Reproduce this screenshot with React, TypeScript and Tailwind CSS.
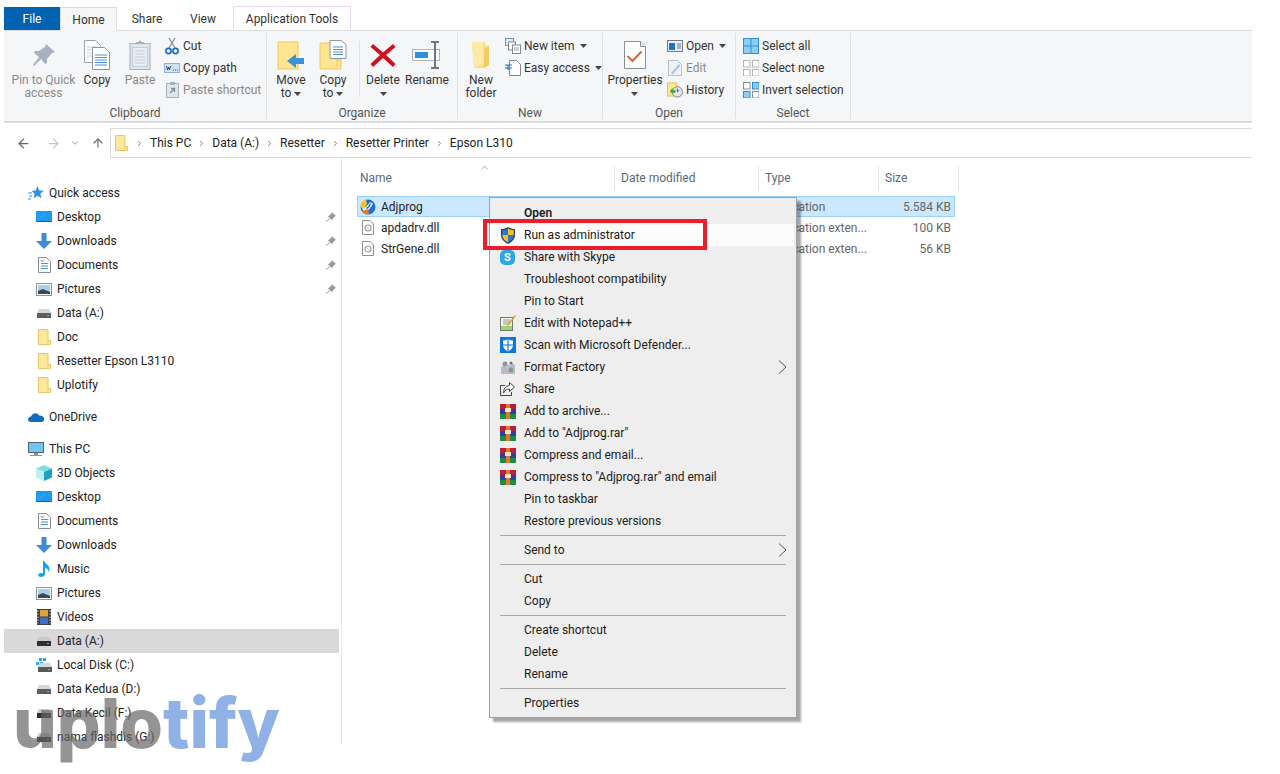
import * as React from 'react';
import { ArrowLeft, ArrowRight, ArrowUp, ChevronDown, ChevronRight, ChevronUp } from 'lucide-react';

const Caret = () => (
  <svg width="7" height="4" viewBox="0 0 7 4" className="inline-block"><path d="M0 0h7L3.5 4z" fill="#444" /></svg>
);

/* ribbon icons */
const PinBig = () => (
  <svg width="24" height="24" viewBox="0 0 24 24">
    <path d="M14 1l9 8-3 1-5 6 0 4-2 1-4-5-7 7-1-1 6-8-5-4 1-2 4 0 6-4z" fill="#a9b1c1" />
  </svg>
);
const CopyBig = () => (
  <svg width="28" height="30" viewBox="0 0 28 30">
    <path d="M1.5.5h11l5 5v17h-16z" fill="#fff" stroke="#9aa3ad" />
    <path d="M4 7h10M4 10h10M4 13h10M4 16h10" stroke="#c5ccd4" />
    <path d="M9.5 7.5h12l5 5v17h-17z" fill="#fff" stroke="#8c96a1" />
    <path d="M12 15h12M12 17.5h12M12 20h12M12 22.5h12M12 25h12" stroke="#4a90d9" strokeWidth="1.2" />
  </svg>
);
const PasteBig = () => (
  <svg width="22" height="30" viewBox="0 0 22 30">
    <rect x="1" y="3.5" width="20" height="26" fill="#dfe5ef" stroke="#a8b0bd" />
    <rect x="3.5" y="7.5" width="15" height="19" fill="#e9edf4" stroke="#c3cad5" />
    <path d="M6 11h10M6 14h10M6 17h10M6 20h10M6 23h10" stroke="#c3cad5" />
    <path d="M7 4h8V2h-2.5L11 0 9.5 2H7z" fill="#a8b0bd" />
  </svg>
);
const ScissorsIcon = () => (
  <svg width="14" height="18" viewBox="0 0 14 18">
    <path d="M4 1l6 10M10 1L4 11" stroke="#8a929c" strokeWidth="1.4" fill="none" />
    <circle cx="3.5" cy="14" r="2.6" fill="none" stroke="#1e6fc4" strokeWidth="1.7" />
    <circle cx="10.5" cy="14" r="2.6" fill="none" stroke="#1e6fc4" strokeWidth="1.7" />
  </svg>
);
const CopyPathIcon = () => (
  <svg width="16" height="10" viewBox="0 0 16 10">
    <rect x=".5" y=".5" width="15" height="9" fill="#cfe4f7" stroke="#8ab6de" />
    <path d="M2.5 3l1 4 1-3 1 3 1-4M9 7h1M11 7h1M13 7h1" stroke="#333" strokeWidth=".9" fill="none" />
  </svg>
);
const PasteShortcutIcon = () => (
  <svg width="13" height="16" viewBox="0 0 13 16">
    <rect x=".5" y="1.5" width="12" height="14" fill="#dfe5ef" stroke="#a8b0bd" />
    <path d="M4 0h5v3H4z" fill="#a8b0bd" />
    <path d="M4 11l4-4M5 6.5h3.5V10" stroke="#7e8896" strokeWidth="1.3" fill="none" />
  </svg>
);
const MoveToIcon = () => (
  <svg width="28" height="30" viewBox="0 0 28 30">
    <path d="M1 2h20v27H1z" fill="#fde68f" stroke="#e9ca62" />
    <path d="M27 18h-8v-4l-9 7 9 7v-4h8z" fill="#3d93d9" />
  </svg>
);
const CopyToIcon = () => (
  <svg width="28" height="30" viewBox="0 0 28 30">
    <path d="M1 3h21v26H1z" fill="#fde68f" stroke="#e9ca62" />
    <path d="M18 27v-7h4" fill="none" stroke="#e9ca62" />
    <path d="M11 .5h11l5 4v14H11z" fill="#fff" stroke="#8c96a1" />
    <path d="M14 7h10M14 9.5h10M14 12h10M14 14.5h10" stroke="#4a90d9" />
  </svg>
);
const DeleteIcon = () => (
  <svg width="26" height="26" viewBox="0 0 26 26">
    <path d="M3 2l10 8.5L23 2l2.5 3L16 13l9.5 9-2.5 3L13 16 3 25l-2.5-3L10 13 .5 5z" fill="#d20f1f" />
  </svg>
);
const RenameIcon = () => (
  <svg width="30" height="28" viewBox="0 0 30 28">
    <rect x=".5" y="8.5" width="27" height="11" fill="#fff" stroke="#aab3bd" />
    <rect x="3" y="11" width="13" height="6" fill="#2e8fdc" />
    <path d="M19 1h8M19 27h8M23 1v26" stroke="#6d7681" strokeWidth="2" />
  </svg>
);
const NewFolderBig = () => (
  <svg width="20" height="28" viewBox="0 0 20 28">
    <path d="M1 1h13v3l4 1v19l-5 3H3z" fill="#fcdd83" />
    <path d="M1 1h11l1 21-10 5z" fill="#fdeaa6" />
    <path d="M13 8l5-3v19l-5 3z" fill="#f4cb62" />
  </svg>
);
const NewItemIcon = () => (
  <svg width="16" height="16" viewBox="0 0 16 16">
    <rect x=".5" y=".5" width="8" height="7" fill="#dcebf8" stroke="#7792ad" />
    <rect x="3.5" y="4" width="7" height="8" fill="#fff" stroke="#7e8893" />
    <rect x="7.5" y="7" width="8" height="8.5" fill="#fff" stroke="#7e8893" />
    <path d="M9 10h5M9 12h5" stroke="#9aa3ad" />
  </svg>
);
const EasyAccessIcon = () => (
  <svg width="16" height="16" viewBox="0 0 16 16">
    <path d="M4.5.5h7l4 4v11h-11z" fill="#fff" stroke="#7e8893" />
    <path d="M0 5h7M0 8h7M3 5v5" stroke="#2272b9" strokeWidth="1.1" fill="none" />
  </svg>
);
const PropertiesBig = () => (
  <svg width="22" height="28" viewBox="0 0 22 28">
    <path d="M.5.5h16l5 5v22H.5z" fill="#fff" stroke="#8a8f96" />
    <path d="M16.5.5v5h5" fill="#eee" stroke="#8a8f96" />
    <path d="M3.5 15l5 5 9-9.5" fill="none" stroke="#da6a2c" strokeWidth="2" />
  </svg>
);
const OpenIcon = () => (
  <svg width="16" height="12" viewBox="0 0 16 12">
    <rect x=".5" y=".5" width="15" height="11" fill="#e8eef5" stroke="#6f7b87" />
    <rect x="2" y="3" width="6" height="7" fill="#1e74c9" />
    <path d="M10 4h4M10 6h4M10 8h4" stroke="#6f7b87" />
  </svg>
);
const EditIcon = () => (
  <svg width="14" height="16" viewBox="0 0 14 16">
    <path d="M.5.5h9l4 4v11H.5z" fill="#eef1f6" stroke="#b9c0cb" />
    <path d="M3 13l8-9 1.5 1.5-8 9z" fill="#a9c4e6" />
  </svg>
);
const HistoryIcon = () => (
  <svg width="17" height="16" viewBox="0 0 17 16">
    <rect x=".5" y=".5" width="10" height="14" fill="#fde68f" stroke="#e3c35a" />
    <circle cx="11" cy="10" r="5.5" fill="#e3e6ea" stroke="#7a828c" />
    <path d="M11 6.5V10l2-2" stroke="#555" fill="none" />
    <path d="M3 9l3-3v2h3v3H6v1.5z" fill="#46a53c" />
  </svg>
);
const Grid4: React.FC<{ cells: boolean[]; stroke: string }> = ({ cells, stroke }) => (
  <svg width="16" height="16" viewBox="0 0 16 16">
    {[[0, 0], [9, 0], [0, 9], [9, 9]].map(([x, y], i) => (
      <rect key={i} x={x + 0.5} y={y + 0.5} width="6.5" height="6.5" fill={cells[i] ? '#8fcdf7' : '#fff'} stroke={cells[i] ? '#2d8fdc' : stroke} />
    ))}
  </svg>
);
const SelectAllIcon = () => (
  <svg width="16" height="16" viewBox="0 0 16 16">
    <rect x=".5" y=".5" width="15" height="15" fill="#8fcdf7" stroke="#2d8fdc" />
    <path d="M8 0v16M0 8h16" stroke="#2d8fdc" />
  </svg>
);

/* nav pane icons */
const Star = () => (
  <svg width="16" height="16" viewBox="0 0 16 16">
    <path d="M9.5 1l1.700 4.400 4.600.3-3.500 3 1.200 4.600-4-2.500-4 2.500 1.200-4.600-3-2.700 4-.4z" fill="#2f8fe0" />
    <path d="M0 8h4M1 11h3M0 14h3" stroke="#2f8fe0" />
  </svg>
);
const DesktopIcon = () => (
  <svg width="16" height="14" viewBox="0 0 16 14">
    <rect width="16" height="11" y="1" fill="#1e9af0" />
    <path d="M1 11L8 5" stroke="#49b2f5" />
    <path d="M0 11.5h16" stroke="#1a5f94" />
  </svg>
);
const DownloadsIcon = () => (
  <svg width="16" height="16" viewBox="0 0 16 16">
    <path d="M5.5 0h5v8H16l-8 8-8-8h5.5z" fill="#3a8bdc" />
  </svg>
);
const DocumentsIcon = () => (
  <svg width="13" height="16" viewBox="0 0 13 16">
    <path d="M.5.5h8l4 4v11H.5z" fill="#fff" stroke="#8b8f95" />
    <path d="M3 4h3M3 6.5h7M3 9h7M3 11.5h7" stroke="#3d94d9" />
  </svg>
);
const PicturesIcon = () => (
  <svg width="16" height="13" viewBox="0 0 16 13">
    <rect x=".5" y=".5" width="15" height="12" fill="#fff" stroke="#8f9498" />
    <rect x="2" y="2" width="12" height="9" fill="#a9cdea" />
    <path d="M2 8l5-2 7 3v2H2z" fill="#3a4a58" />
  </svg>
);
const DriveIcon: React.FC<{ dark?: boolean }> = ({ dark }) => (
  <svg width="14" height="9" viewBox="0 0 14 9">
    <path d="M2 0h10l2 4H0z" fill={dark ? '#c9c9c9' : '#d5d8da'} />
    <rect y="4" width="14" height="5" fill={dark ? '#2e2e2e' : '#5a5e60'} />
    <rect x="10" y="6" width="2" height="1" fill="#55d14a" />
  </svg>
);
const LocalDiskIcon = () => (
  <svg width="16" height="14" viewBox="0 0 16 14">
    <path d="M3 0h3v3H3zM7 0h3v3H7zM0 4h3v3H0zM4 4h3v3H4z" fill="#2aa5e8" />
    <path d="M4 5h10l2 4H2z" fill="#d5d8da" />
    <rect x="2" y="9" width="14" height="5" fill="#55595c" />
    <rect x="12" y="11" width="2" height="1" fill="#55d14a" />
  </svg>
);
const FolderSmall = () => (
  <svg width="13" height="16" viewBox="0 0 13 16">
    <path d="M.5.5H10v11h2.500v4H.5z" fill="#ffe89c" stroke="#e6c767" />
    <path d="M10 11.5v4" stroke="#e6c767" />
  </svg>
);
const OneDriveIcon = () => (
  <svg width="16" height="10" viewBox="0 0 16 10">
    <path d="M3 10C-1 10-1 5 3 4.5 4.5.5 9.5 0 11 3.5c3-.5 6 2 5 4.5-.5 1.5-1.5 2-3 2z" fill="#0f6cc0" />
  </svg>
);
const ThisPcIcon = () => (
  <svg width="16" height="15" viewBox="0 0 16 15">
    <rect x=".5" y=".5" width="15" height="10" fill="#6fc6f2" stroke="#566772" />
    <path d="M6 11h4v2H6z" fill="#8d9599" />
    <path d="M2 13.5h12" stroke="#8d9599" />
  </svg>
);
const CubeIcon = () => (
  <svg width="16" height="16" viewBox="0 0 16 16">
    <path d="M8 0l8 3.5L8 7 0 3.5z" fill="#7fdce2" />
    <path d="M0 3.5L8 7v9l-8-3.5z" fill="#bdeef0" />
    <path d="M16 3.5L8 7v9l8-3.5z" fill="#1e9fc4" />
  </svg>
);
const MusicIcon = () => (
  <svg width="12" height="16" viewBox="0 0 12 16">
    <path d="M5 0h1.500c.5 3 5 4 5 8 0 1-.5 2-1 3 0-2-1.500-4-3.500-4.500V13c0 2-2 3-4 3-4 0-3.500-4 0-4 .7 0 1.500.2 2 .5z" fill="#18a0ea" />
  </svg>
);
const VideosIcon = () => (
  <svg width="14" height="16" viewBox="0 0 14 16">
    <rect width="14" height="16" fill="#3b3f44" />
    <rect x="3" y="1" width="8" height="6.5" fill="#d8a93a" />
    <rect x="3" y="8.5" width="8" height="6.5" fill="#3f6fc7" />
    <path d="M1 1.5v13M13 1.5v13" stroke="#d8d8d8" strokeDasharray="1.5 1.5" />
  </svg>
);
const PinSmall = () => (
  <svg width="10" height="10" viewBox="0 0 10 10">
    <path d="M6 0l4 4-1.200.4L6.500 7l-.3 1.500L1.700 4 3 3.700 5.600 1.200zM3 6.200l.8.800L.5 10 0 9.500z" fill="#9a9a9a" />
  </svg>
);

/* file icons */
const AdjprogIcon = () => (
  <svg width="16" height="16" viewBox="0 0 16 16">
    <circle cx="8" cy="8" r="7.5" fill="#1f6fd0" />
    <path d="M2 9c3 0 5.500-2.500 8-6l3 1.500c-2 4-5 8-9 9z" fill="#dff0ff" />
    <path d="M.5 8c0-3 2-6.500 5.500-7.500L7 5 3 10z" fill="#f6c51f" />
    <path d="M2 12l6-2 1 4.500-3.500 1z" fill="#f07a1a" />
    <path d="M6 9c2-1 3-3 4-5l1 1c-1 2-2 4-4 5z" fill="#1f6fd0" />
  </svg>
);
const DllIcon = () => (
  <svg width="12" height="15" viewBox="0 0 12 15">
    <path d="M.5.5H8L11.500 4v10.500H.5z" fill="#fff" stroke="#8f8f8f" />
    <circle cx="6" cy="8" r="3" fill="none" stroke="#9d9d9d" strokeWidth="1.2" />
    <path d="M4 6l4 4" stroke="#c4c4c4" />
  </svg>
);

/* context menu icons */
const ShieldIcon = () => (
  <svg width="16" height="17" viewBox="0 0 16 17">
    <path d="M8 0c2 1.500 4.500 2 7 2v6c0 4-3 7-7 9-4-2-7-5-7-9V2c2.500 0 5-.5 7-2z" fill="#2a3f66" />
    <path d="M8 1.500V8h5.800V3.200C12 3 9.500 2.500 8 1.500zM8 8v7.500C5.200 14 2.700 12 2.200 8z" fill="#f5bf26" />
    <path d="M8 1.500V8H2.200V3.200C4 3 6.500 2.500 8 1.500zM8 8v7.500c2.800-1.500 5.300-3.500 5.800-7.500z" fill="#2f77c9" />
  </svg>
);
const SkypeIcon = () => (
  <div className="w-[15px] h-[15px] rounded-[5px] bg-[#2ba6e8] flex items-center justify-center text-white text-[11px] font-bold leading-none">S</div>
);
const NotepadIcon = () => (
  <svg width="16" height="16" viewBox="0 0 16 16">
    <rect x=".5" y="2.5" width="12" height="13" fill="#f6f6e2" stroke="#777" />
    <path d="M1 11h11v4H1z" fill="#9ed36a" />
    <path d="M3 5h7M3 7h7M3 9h5" stroke="#999" />
    <path d="M15 0l1 1-7 9-2 1 .5-2z" fill="#d2a32e" />
  </svg>
);
const DefenderIcon = () => (
  <svg width="16" height="16" viewBox="0 0 16 16">
    <rect width="16" height="16" fill="#0a78d7" />
    <path d="M8 2c1.500 1 3.500 1.500 5 1.500V8c0 3-2 5-5 6.500C5 13 3 11 3 8V3.500C4.500 3.500 6.500 3 8 2z" fill="#fff" />
    <path d="M8 2v12.500M3 8h10" stroke="#0a78d7" strokeWidth="1.2" />
  </svg>
);
const FormatFactoryIcon = () => (
  <svg width="16" height="16" viewBox="0 0 16 16">
    <path d="M1 15V8l4-2 1 2 3-3 1 2 2-3 3 2v9z" fill="#b9bec4" />
    <circle cx="5" cy="5" r="2.5" fill="#8e949b" />
    <circle cx="11" cy="11" r="2.5" fill="#8e949b" />
    <circle cx="11" cy="4" r="1.5" fill="#6a7077" />
  </svg>
);
const ShareIcon = () => (
  <svg width="15" height="14" viewBox="0 0 15 14">
    <path d="M5 3.500H.5v10h11V10" fill="none" stroke="#444" />
    <path d="M9.500.5l5 4.500-5 4.500V7C7 7 5 8 3.500 11c0-4 2-7 6-7.500z" fill="#fff" stroke="#444" />
  </svg>
);
const WinrarIcon = () => (
  <svg width="16" height="15" viewBox="0 0 16 15">
    <rect width="16" height="5" fill="#b5203e" />
    <rect y="5" width="16" height="5" fill="#2f3f9e" />
    <rect y="10" width="16" height="5" fill="#1e8a44" />
    <rect x="6" width="4" height="15" fill="#e8772a" />
    <rect x="5" y="4" width="6" height="4" fill="#f3e6c5" />
  </svg>
);
const MenuArrow = () => (
  <svg width="9" height="14" viewBox="0 0 9 14" className="ml-auto mr-[7px]"><path d="M1 .5L8 7l-7 6.500" fill="none" stroke="#555" /></svg>
);

const LargeBtn: React.FC<{ w: string; icon: React.ReactNode; lines: string[]; off?: boolean; caret?: boolean }> = ({ w, icon, lines, off, caret }) => (
  <div className={`${w} flex flex-col items-center ${off ? 'text-[#8a8a8a]' : 'text-[#333]'}`}>
    <div className="h-[39px] mt-[2px] flex items-center justify-center">{icon}</div>
    <div className="leading-[13px] text-center whitespace-nowrap">
      {lines.map((l, i) => (
        <div key={i} className="flex items-center justify-center gap-[3px] h-[13px]">
          {l}
          {caret && i === lines.length - 1 && lines.length > 1 && <Caret />}
        </div>
      ))}
      {caret && lines.length === 1 && <div className="h-[13px] flex items-center justify-center"><Caret /></div>}
    </div>
  </div>
);

const SmallBtn: React.FC<{ icon: React.ReactNode; label: string; off?: boolean; caret?: boolean }> = ({ icon, label, off, caret }) => (
  <div className={`h-[22px] flex items-center gap-[3px] whitespace-nowrap ${off ? 'text-[#8a8a8a]' : 'text-[#333]'}`}>
    <div className="w-4 flex justify-center">{icon}</div>
    <span>{label}</span>
    {caret && <span className="ml-[2px] flex"><Caret /></span>}
  </div>
);

const Group: React.FC<{ w: string; pad?: string; label: string; children: React.ReactNode }> = ({ w, pad, label, children }) => (
  <div className={`${w} shrink-0 border-r border-[#dfe1e3] my-[2px] flex flex-col`}>
    <div className={`h-[73px] shrink-0 flex ${pad ?? ''}`}>{children}</div>
    <div className="h-[13px] leading-[14px] shrink-0 text-center text-[#555]">{label}</div>
  </div>
);

const Ribbon = () => (
  <div className="h-[92px] ml-[4px] w-[1248px] bg-[#f5f6f7] border-b-2 border-[#dadbdc] flex text-[12px]">
    <Group w="w-[263px]" pad="pl-[8px]" label="Clipboard">
      <LargeBtn w="w-[63px]" icon={<PinBig />} lines={['Pin to Quick', 'access']} off />
      <LargeBtn w="w-[44px]" icon={<CopyBig />} lines={['Copy']} />
      <LargeBtn w="w-[42px]" icon={<PasteBig />} lines={['Paste']} off />
      <div className="ml-[3px] pt-[2px]">
        <SmallBtn icon={<ScissorsIcon />} label="Cut" />
        <SmallBtn icon={<CopyPathIcon />} label="Copy path" />
        <SmallBtn icon={<PasteShortcutIcon />} label="Paste shortcut" off />
      </div>
    </Group>
    <Group w="w-[191px]" pad="pl-[3px]" label="Organize">
      <LargeBtn w="w-[42px]" icon={<MoveToIcon />} lines={['Move', 'to']} caret />
      <LargeBtn w="w-[42px]" icon={<CopyToIcon />} lines={['Copy', 'to']} caret />
      <div className="ml-[5px] mt-[8px] w-px h-[56px] bg-[#dfe1e3]" />
      <LargeBtn w="w-[46px]" icon={<DeleteIcon />} lines={['Delete']} caret />
      <LargeBtn w="w-[42px]" icon={<RenameIcon />} lines={['Rename']} />
    </Group>
    <Group w="w-[145px]" pad="pl-[4px]" label="New">
      <LargeBtn w="w-[40px]" icon={<NewFolderBig />} lines={['New', 'folder']} />
      <div className="ml-[5px] pt-[2px]">
        <SmallBtn icon={<NewItemIcon />} label="New item" caret />
        <SmallBtn icon={<EasyAccessIcon />} label="Easy access" caret />
      </div>
    </Group>
    <Group w="w-[133px]" label="Open">
      <LargeBtn w="w-[64px]" icon={<PropertiesBig />} lines={['Properties']} caret />
      <div className="pt-[2px]">
        <SmallBtn icon={<OpenIcon />} label="Open" caret />
        <SmallBtn icon={<EditIcon />} label="Edit" off />
        <SmallBtn icon={<HistoryIcon />} label="History" />
      </div>
    </Group>
    <Group w="w-[115px]" pad="pl-[7px]" label="Select">
      <div className="pt-[2px]">
        <SmallBtn icon={<SelectAllIcon />} label="Select all" />
        <SmallBtn icon={<Grid4 cells={[false, false, false, false]} stroke="#b5b5b5" />} label="Select none" />
        <SmallBtn icon={<Grid4 cells={[false, true, true, false]} stroke="#8a8f96" />} label="Invert selection" />
      </div>
    </Group>
  </div>
);

const Tabs = () => (
  <div className="h-[31px] ml-[4px] w-[1248px] border-b border-[#dadbdc] flex items-end text-[12px] text-[#333]">
    <div className="w-[56px] h-[23px] bg-[#0063b1] text-white flex items-center justify-center">File</div>
    <div className="w-[57px] h-[24px] -mb-px bg-[#f5f6f7] border border-b-0 border-[#dadbdc] flex items-center justify-center">Home</div>
    <div className="w-[60px] h-[23px] flex items-center justify-center">Share</div>
    <div className="w-[52px] h-[23px] flex items-center justify-center">View</div>
    <div className="ml-[4px] w-[118px] h-[24px] border border-b-0 border-[#e6d5ec] flex items-center justify-center">Application Tools</div>
  </div>
);

const crumbs = ['This PC', 'Data (A:)', 'Resetter', 'Resetter Printer', 'Epson L310'];

const AddressBar = () => (
  <div className="mt-[5px] h-[30px] flex text-[12px]">
    <div className="w-[110px] shrink-0 pl-[16px] flex items-center text-[#666]">
      <ArrowLeft size={15} strokeWidth={2} />
      <ArrowRight size={15} strokeWidth={2} className="ml-[15px] text-[#c6c6c6]" />
      <ChevronDown size={10} strokeWidth={2} className="ml-[9px] text-[#888]" />
      <ArrowUp size={14} strokeWidth={2} className="ml-[11px]" />
    </div>
    <div className="w-[1142px] border-y border-l border-[#dcdcdc] flex items-center pl-[4px] text-[#222]">
      <FolderSmall />
      <div className="ml-[4px] flex items-center">
        {crumbs.map((c) => (
          <React.Fragment key={c}>
            <ChevronRight size={9} strokeWidth={2.5} className="text-[#777] mx-[3px]" />
            <span className="ml-[3px] mr-[3px]">{c}</span>
          </React.Fragment>
        ))}
      </div>
    </div>
  </div>
);

const NavRow: React.FC<{ icon: React.ReactNode; label: string; pin?: boolean; top?: boolean; on?: boolean; gap?: boolean }> = ({ icon, label, pin, top, on, gap }) => (
  <div className={`h-[24px] flex items-center ${on ? 'bg-[#d9d9d9]' : ''} ${gap ? 'mt-[8px]' : ''} ${top ? 'pl-[24px]' : 'pl-[32px]'}`}>
    <div className="w-[16px] flex justify-center shrink-0">{icon}</div>
    <span className="ml-[5px] text-[#222] whitespace-nowrap">{label}</span>
    {pin && <span className="ml-auto mr-[3px] flex"><PinSmall /></span>}
  </div>
);

const Sidebar = () => (
  <div className="ml-[4px] w-[338px] shrink-0 border-r border-[#e6e6e6] pr-[2px] pt-[23px] h-[587px] text-[12px] box-border">
    <NavRow top icon={<Star />} label="Quick access" />
    <NavRow icon={<DesktopIcon />} label="Desktop" pin />
    <NavRow icon={<DownloadsIcon />} label="Downloads" pin />
    <NavRow icon={<DocumentsIcon />} label="Documents" pin />
    <NavRow icon={<PicturesIcon />} label="Pictures" pin />
    <NavRow icon={<DriveIcon />} label="Data (A:)" />
    <NavRow icon={<FolderSmall />} label="Doc" />
    <NavRow icon={<FolderSmall />} label="Resetter Epson L3110" />
    <NavRow icon={<FolderSmall />} label="Uplotify" />
    <NavRow gap top icon={<OneDriveIcon />} label="OneDrive" />
    <NavRow gap top icon={<ThisPcIcon />} label="This PC" />
    <NavRow icon={<CubeIcon />} label="3D Objects" />
    <NavRow icon={<DesktopIcon />} label="Desktop" />
    <NavRow icon={<DocumentsIcon />} label="Documents" />
    <NavRow icon={<DownloadsIcon />} label="Downloads" />
    <NavRow icon={<MusicIcon />} label="Music" />
    <NavRow icon={<PicturesIcon />} label="Pictures" />
    <NavRow icon={<VideosIcon />} label="Videos" />
    <NavRow on icon={<DriveIcon dark />} label="Data (A:)" />
    <NavRow icon={<LocalDiskIcon />} label="Local Disk (C:)" />
    <NavRow icon={<DriveIcon />} label="Data Kedua (D:)" />
    <NavRow icon={<DriveIcon dark />} label="Data Kecil (F:)" />
    <NavRow icon={<DriveIcon dark />} label="nama flashdis (G:)" />
  </div>
);

const FileRow: React.FC<{ icon: React.ReactNode; name: string; type: string; size: string; on?: boolean }> = ({ icon, name, type, size, on }) => (
  <div className={`h-[21px] w-[598px] flex items-center border ${on ? 'bg-[#cce8ff] border-[#99d1ff]' : 'border-transparent'}`}>
    <div className="w-[16px] ml-[2px] flex justify-center shrink-0">{icon}</div>
    <span className="ml-[5px] w-[233px] text-[#222]">{name}</span>
    <span className="ml-[151px] w-[116px] text-[#666] whitespace-nowrap">{type}</span>
    <span className="w-[70px] text-right text-[#666]">{size}</span>
  </div>
);

const FileList = () => (
  <div className="ml-[15px] pt-[8px] text-[12px]">
    <div className="relative h-[24px] flex text-[#5a6a7a]">
      <ChevronUp size={11} strokeWidth={1.5} className="absolute left-[122px] -top-[4px] text-[#777]" />
      <div className="w-[258px] pl-[3px] flex items-center border-r border-[#e5e5e5]">Name</div>
      <div className="w-[144px] pl-[6px] flex items-center border-r border-[#e5e5e5]">Date modified</div>
      <div className="w-[120px] pl-[6px] flex items-center border-r border-[#e5e5e5]">Type</div>
      <div className="w-[80px] pl-[6px] flex items-center border-r border-[#e5e5e5]">Size</div>
    </div>
    <div className="mt-[6px]">
      <FileRow on icon={<AdjprogIcon />} name="Adjprog" type="Application" size="5.584 KB" />
      <FileRow icon={<DllIcon />} name="apdadrv.dll" type="Application exten..." size="100 KB" />
      <FileRow icon={<DllIcon />} name="StrGene.dll" type="Application exten..." size="56 KB" />
    </div>
  </div>
);

const MenuItem: React.FC<{ icon?: React.ReactNode; label: string; bold?: boolean; on?: boolean; arrow?: boolean }> = ({ icon, label, bold, on, arrow }) => (
  <div className={`h-[22px] flex items-center pl-[9px] ${on ? 'bg-[#fbfbfb]' : ''}`}>
    <div className="w-[17px] flex justify-center shrink-0">{icon}</div>
    <span className={`ml-[8px] whitespace-nowrap text-[#1c1c1c] ${bold ? 'font-semibold' : ''}`}>{label}</span>
    {arrow && <MenuArrow />}
  </div>
);
const MenuSep = () => <div className="h-px bg-[#a9a9a9] ml-[10px] mr-[8px] my-[3px]" />;

const ContextMenu = () => (
  <div className="absolute left-[489px] top-[197px] w-[308px] h-[521px] bg-[#eeeeee] border border-[#a0a0a0] shadow-[4px_4px_2px_rgba(0,0,0,0.35)] pt-[4px] pr-[2px] text-[12px]">
    <MenuItem bold label="Open" />
    <MenuItem on icon={<ShieldIcon />} label="Run as administrator" />
    <MenuItem icon={<SkypeIcon />} label="Share with Skype" />
    <MenuItem label="Troubleshoot compatibility" />
    <MenuItem label="Pin to Start" />
    <MenuItem icon={<NotepadIcon />} label="Edit with Notepad++" />
    <MenuItem icon={<DefenderIcon />} label="Scan with Microsoft Defender..." />
    <MenuItem icon={<FormatFactoryIcon />} label="Format Factory" arrow />
    <MenuItem icon={<ShareIcon />} label="Share" />
    <MenuItem icon={<WinrarIcon />} label="Add to archive..." />
    <MenuItem icon={<WinrarIcon />} label='Add to "Adjprog.rar"' />
    <MenuItem icon={<WinrarIcon />} label="Compress and email..." />
    <MenuItem icon={<WinrarIcon />} label='Compress to "Adjprog.rar" and email' />
    <MenuItem label="Pin to taskbar" />
    <MenuItem label="Restore previous versions" />
    <MenuSep />
    <MenuItem label="Send to" arrow />
    <MenuSep />
    <MenuItem label="Cut" />
    <MenuItem label="Copy" />
    <MenuSep />
    <MenuItem label="Create shortcut" />
    <MenuItem label="Delete" />
    <MenuItem label="Rename" />
    <MenuSep />
    <MenuItem label="Properties" />
    <div className="absolute -left-[7px] top-[21px] w-[224px] h-[31px] border-[4px] border-[#e8202e]" />
  </div>
);

export default function App() {
  return (
    <div className="relative w-[1280px] h-[774px] overflow-hidden bg-white font-['Roboto',sans-serif]">
      <Tabs />
      <Ribbon />
      <AddressBar />
      <div className="flex h-[616px]">
        <Sidebar />
        <FileList />
      </div>
      <ContextMenu />
      <div className="absolute left-[13px] top-[681px] text-[69px] leading-[84px] font-extrabold font-['Inter',sans-serif] whitespace-nowrap pointer-events-none">
        <span className="text-[#666]/70">uplo</span>
        <span className="text-[#6a97dc]/75">tify</span>
      </div>
    </div>
  );
}
